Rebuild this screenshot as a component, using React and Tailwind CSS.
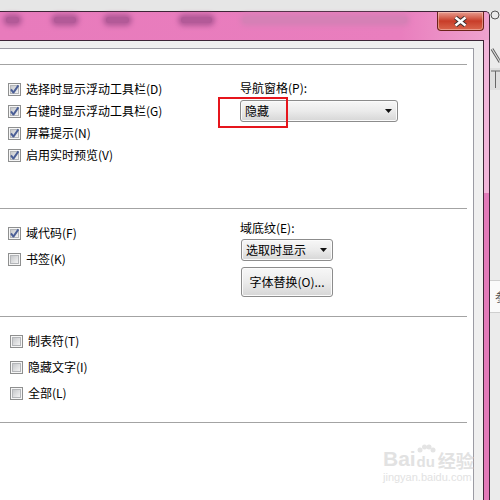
import React from "react";

function Box({ checked }) {
  return (
    <svg width="13" height="13" viewBox="0 0 13 13" className="shrink-0">
      <defs>
        <linearGradient id="cbg" x1="0" y1="0" x2="1" y2="1">
          <stop offset="0" stopColor="#c3c5c8" />
          <stop offset="1" stopColor="#f6f6f6" />
        </linearGradient>
      </defs>
      <rect x="0.5" y="0.5" width="12" height="12" fill="#f6f6f6" stroke="#8e8f8f" />
      <rect x="2.5" y="2.5" width="8" height="8" fill="url(#cbg)" stroke="#b4b6b9" />
      {checked && (
        <path
          d="M3 6.4 L5.4 9.6 L10.4 2.4"
          fill="none"
          stroke="#4a5e96"
          strokeWidth="1.9"
          strokeLinejoin="round"
        />
      )}
    </svg>
  );
}

function Row({ checked, label, h }) {
  return (
    <div className={`flex items-center ${h}`}>
      <Box checked={checked} />
      <span className="ml-[5px] leading-[16px]">{label}</span>
    </div>
  );
}

function Arrow() {
  return (
    <svg width="7" height="4" viewBox="0 0 7 4" className="shrink-0">
      <path d="M0 0 H7 L3.5 4 Z" fill="#111" />
    </svg>
  );
}

const btn =
  "rounded-[3px] border border-[#8c8c8c] bg-linear-to-b from-[#f7f7f7] via-[#ebebeb] via-50% to-[#d6d6d6] shadow-[inset_0_0_0_1px_#fbfbfb]";

function Sep() {
  return <div className="h-px bg-[#a3a3a3] shrink-0" />;
}

const blob = "h-[6px] shrink-0 rounded-full bg-[#b35a98] shadow-[0_0_5px_3px_#b35a98]";

export default function App() {
  return (
    <div className="relative w-[500px] h-[500px] overflow-hidden bg-[#e6e6e6] text-[12px] text-black font-['Noto_Sans_CJK_SC','Microsoft_YaHei',sans-serif]">
      <div className="flex h-full">
        {/* window */}
        <div className="mt-[11px] w-[490px] shrink-0 flex flex-col border-t border-r border-[#3c2436] rounded-tr-[5px] bg-[#ea86c3]">
          {/* title bar (blurred glass) */}
          <div className="flex h-[28px] shrink-0 rounded-tr-[4px] bg-linear-to-r from-[#e87bbc] via-[#e97ebe] via-82% to-[#eea2ce]">
            <div className="flex flex-1 items-start pt-[5px]">
              <div className={`ml-[6px] w-[13px] ${blob}`} />
              <div className={`ml-[35px] w-[22px] ${blob}`} />
              <div className={`ml-[30px] w-[23px] ${blob}`} />
              <div className={`ml-[52px] w-[31px] ${blob}`} />
              <div className="ml-[31px] w-[164px] h-[6px] shrink-0 rounded-full bg-[#d680b6] shadow-[0_0_5px_3px_#d680b6]" />
            </div>
            <div className="mr-[5px] h-[19px] w-[47px] shrink-0 flex items-center justify-center rounded-b-[4px] border border-t-0 border-[#6a2219] bg-linear-to-b from-[#e79b8f] via-[#c83c28] via-50% to-[#d9654c] shadow-[inset_0_0_0_1px_rgba(255,220,210,0.45)]">
              <svg width="15" height="11" viewBox="0 0 15 11">
                <path d="M2.5 1.5 L12.5 9.5 M12.5 1.5 L2.5 9.5" stroke="#3b2f2f" strokeWidth="4.4" />
                <path d="M2.5 1.5 L12.5 9.5 M12.5 1.5 L2.5 9.5" stroke="#ffffff" strokeWidth="2.4" />
              </svg>
            </div>
          </div>
          {/* body */}
          <div className="flex flex-1">
            <div className="flex-1 flex flex-col border-t border-r border-[#3c2436] bg-[#efefef]">
              <div className="mt-[7px] mr-[9px] flex-1 flex flex-col bg-white border-t border-r border-[#9b9ba3] pt-[15px] pr-[6px]">
                <Sep />
                {/* section 1 */}
                <div className="flex h-[143px] shrink-0">
                  <div className="w-[240px] pl-[8px] pt-[13px] flex flex-col">
                    <Row checked label="选择时显示浮动工具栏(D)" h="h-[22px]" />
                    <Row checked label="右键时显示浮动工具栏(G)" h="h-[22px]" />
                    <Row checked label="屏幕提示(N)" h="h-[22px]" />
                    <Row checked label="启用实时预览(V)" h="h-[22px]" />
                  </div>
                  <div className="pt-[15px] flex flex-col">
                    <div className="leading-[16px]">导航窗格(P):</div>
                    <div className={`mt-[4px] w-[158px] h-[22px] flex items-center justify-between pl-[4px] pr-[5px] ${btn}`}>
                      <span className="leading-[16px]">隐藏</span>
                      <Arrow />
                    </div>
                  </div>
                </div>
                <Sep />
                {/* section 2 */}
                <div className="flex h-[107px] shrink-0">
                  <div className="w-[240px] pl-[8px] pt-[11px] flex flex-col">
                    <Row checked label="域代码(F)" h="h-[26px]" />
                    <Row label="书签(K)" h="h-[26px]" />
                  </div>
                  <div className="pt-[11px] flex flex-col">
                    <div className="leading-[16px]">域底纹(E):</div>
                    <div className={`mt-[3px] ml-px w-[92px] h-[22px] flex items-center justify-between pl-[4px] pr-[5px] ${btn}`}>
                      <span className="leading-[16px]">选取时显示</span>
                      <Arrow />
                    </div>
                    <div className={`mt-[6px] ml-px w-[92px] h-[30px] flex items-center justify-center ${btn}`}>
                      <span className="leading-[16px]">字体替换(O)...</span>
                    </div>
                  </div>
                </div>
                <Sep />
                {/* section 3 */}
                <div className="h-[105px] shrink-0 pl-[10px] pt-[11px] flex flex-col">
                  <Row label="制表符(T)" h="h-[26px]" />
                  <Row label="隐藏文字(I)" h="h-[26px]" />
                  <Row label="全部(L)" h="h-[26px]" />
                </div>
                <Sep />
              </div>
            </div>
            {/* right pink frame */}
            <div className="w-[5px] shrink-0 flex flex-col">
              <div className="h-[153px] bg-[#f2b4d9]" />
              <div className="flex-1 bg-[#e27ab9]" />
            </div>
          </div>
        </div>
        {/* background app at right */}
        <div className="flex-1 flex flex-col bg-[#ebebeb]">
          <svg width="10" height="100" viewBox="0 0 10 100" className="shrink-0">
            <rect x="0" y="0" width="10" height="11" fill="#e6e6e6" />
            <circle cx="5" cy="15" r="4" fill="none" stroke="#555" strokeWidth="1" />
            <path d="M2 49 L10 62" stroke="#555" strokeWidth="3" />
            <path d="M2 49 L10 62" stroke="#ddd" strokeWidth="1.2" />
            <rect x="0" y="68" width="10" height="22" fill="#dedede" />
            <path d="M1 71 H10 M5.5 71 V88" stroke="#666" strokeWidth="1" />
          </svg>
          <div className="mt-[180px] h-[33px] border-y border-[#cfcfcf] bg-[#fafafa] flex items-center pl-[5px] text-[12px] text-[#555] overflow-hidden whitespace-nowrap">
            参
          </div>
        </div>
      </div>

      {/* red annotation box */}
      <div className="absolute left-[218px] top-[97px] w-[70px] h-[31px] border-2 border-[#e6151c]" />

      {/* watermark */}
      <div className="absolute left-[383px] top-[444px] flex flex-col items-start text-[#e2e2e2] font-['Liberation_Sans',sans-serif]">
        <div className="flex items-end leading-none">
          <span className="text-[21px] font-bold">Bai</span>
          <span className="flex flex-col items-center">
            <svg width="20" height="10" viewBox="0 0 20 10">
              <circle cx="4" cy="6" r="2.5" fill="#e4e4e4" />
              <circle cx="8.5" cy="3" r="2.5" fill="#e4e4e4" />
              <circle cx="13" cy="3" r="2.5" fill="#e4e4e4" />
              <circle cx="17" cy="6" r="2.5" fill="#e4e4e4" />
            </svg>
            <span className="text-[15px] font-bold leading-none">du</span>
          </span>
          <span className="ml-[2px] text-[18px] font-bold font-['Noto_Sans_CJK_SC',sans-serif] leading-none">经验</span>
        </div>
        <div className="mt-[3px] text-[11px] leading-none">jingyan.baidu.com</div>
      </div>
    </div>
  );
}
